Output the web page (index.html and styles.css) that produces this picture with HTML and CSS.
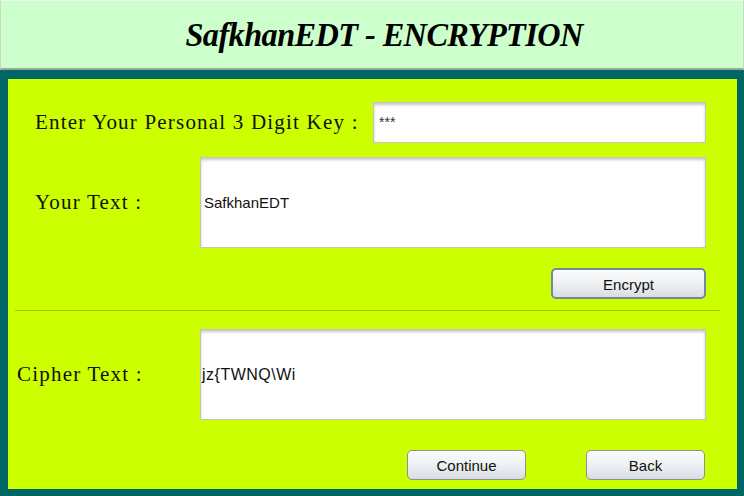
FILE: index.html
```html
<!DOCTYPE html>
<html>
<head>
<meta charset="utf-8">
<link rel="stylesheet" href="styles.css">
</head>
<body>
<header class="title-bar">
  <h1 class="title">SafkhanEDT - ENCRYPTION</h1>
</header>
<main class="frame">
  <section class="panel">
    <div class="row row-key">
      <label class="label">Enter Your Personal 3 Digit Key :</label>
      <div class="field field-key">***</div>
    </div>
    <div class="row row-text">
      <label class="label label-text">Your Text :</label>
      <div class="field field-area">SafkhanEDT</div>
    </div>
    <div class="row row-encrypt">
      <button class="btn btn-focus">Encrypt</button>
    </div>
    <hr class="sep">
    <div class="row row-cipher">
      <label class="label label-cipher">Cipher Text :</label>
      <div class="field field-area field-cipher">jz{TWNQ\Wi</div>
    </div>
    <div class="row row-actions">
      <button class="btn btn-continue">Continue</button>
      <button class="btn btn-back">Back</button>
    </div>
  </section>
</main>
</body>
</html>
```
FILE: styles.css
```css
* { box-sizing: border-box; }
html, body { margin: 0; padding: 0; }
body {
  width: 744px;
  height: 496px;
  overflow: hidden;
  background: #006666;
  font-family: "Liberation Serif", serif;
}
.title-bar {
  height: 70px;
  background: #ccffcc;
  border: 1px solid #c8d8c8;
  border-top-color: #eef8ee;
  border-bottom: 2px solid #9aa89a;
  display: flex;
  align-items: center;
  justify-content: center;
  padding-left: 24px;
}
.title {
  margin: 0;
  font-family: "Liberation Serif", serif;
  font-style: italic;
  font-weight: bold;
  font-size: 34px;
  letter-spacing: -0.6px;
  transform: scaleX(0.95);
  color: #000;
  padding-top: 1px;
}
.frame {
  height: 426px;
  padding: 9px 7px 7px 8px;
  background: #006666;
}
.panel {
  height: 100%;
  background: #ccff00;
  padding-top: 23px;
}
.row { display: flex; align-items: center; }
.label {
  font-family: "Liberation Serif", serif;
  font-size: 21px;
  color: #111;
  letter-spacing: 1.2px;
}
.row-key .label { margin-left: 27px; width: 338px; white-space: nowrap; }
.row-text { margin-top: 14px; }
.label-text { margin-left: 27px; width: 165px; }
.field {
  background: #fff;
  border: 1px solid #c4c4c4;
  box-shadow: inset 0 2px 3px rgba(0,0,0,0.22);
  font-family: "Liberation Sans", Arial, sans-serif;
  font-size: 15px;
  color: #111;
  display: flex;
  align-items: center;
}
.field-key { width: 333px; height: 41px; padding-left: 5px; padding-bottom: 2px; color: #333; font-size: 14px; }
.field-area { width: 506px; height: 91px; padding-left: 3px; }
.field-cipher { padding-left: 1px; font-size: 16px; letter-spacing: 0.5px; }
.row-encrypt { margin-top: 20px; justify-content: flex-end; padding-right: 31px; }
.btn {
  font-family: "Liberation Sans", Arial, sans-serif;
  font-size: 15px;
  color: #111;
  border: 1px solid #8a9299;
  border-radius: 5px;
  background: linear-gradient(#fafbfc, #eef0f3 50%, #d9dde3);
  box-shadow: inset 0 1px 0 #fff;
  padding: 0;
}
.btn-focus {
  width: 155px;
  height: 31px;
  border: 2px solid #6f8aa3;
  padding-top: 1px;
}
.sep {
  margin: 11px 17px 0 7px;
  border: 0;
  height: 1px;
  background: #a9c400;
}
.row-cipher { margin-top: 18px; }
.label-cipher { margin-left: 9px; width: 183px; }
.row-actions { margin-top: 30px; padding-left: 399px; }
.btn-continue, .btn-back { width: 119px; height: 30px; }
.btn-back { margin-left: 60px; }
```
